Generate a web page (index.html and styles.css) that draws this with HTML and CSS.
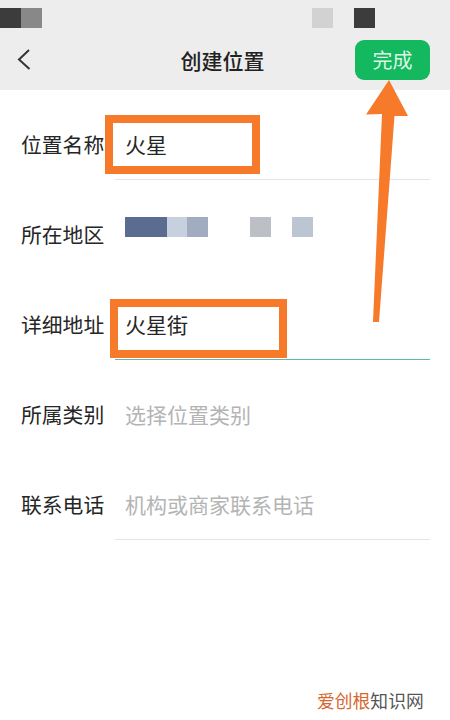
FILE: index.html
```html
<!DOCTYPE html>
<html lang="zh-CN">
<head>
<meta charset="utf-8">
<title>创建位置</title>
<link rel="stylesheet" href="styles.css">
</head>
<body>
<div class="page">
  <header class="top">
    <div class="status">
      <div class="mosaic">
        <i class="px dark"></i><i class="px mid"></i>
      </div>
      <div class="mosaic right">
        <i class="px light"></i><i class="px gap"></i><i class="px dark"></i>
      </div>
    </div>
    <div class="nav">
      <svg class="back" width="14" height="24" viewBox="0 0 14 24"><path d="M12 2 L2 11.500 L12.500 21" fill="none" stroke="#333" stroke-width="2"/></svg>
      <h1 class="title">创建位置</h1>
      <button class="done">完成</button>
    </div>
  </header>
  <main class="form">
    <div class="row"><span class="label">位置名称</span><div class="field line"><span class="value">火星</span></div></div>
    <div class="row"><span class="label">所在地区</span><div class="field">
      <div class="region"><i class="r r1"></i><i class="r r2"></i><i class="r r3"></i><i class="r r4"></i><i class="r r5"></i></div>
    </div></div>
    <div class="row"><span class="label">详细地址</span><div class="field line active"><span class="value">火星街</span></div></div>
    <div class="row"><span class="label">所属类别</span><div class="field"><span class="hint">选择位置类别</span></div></div>
    <div class="row"><span class="label">联系电话</span><div class="field line"><span class="hint">机构或商家联系电话</span></div></div>
  </main>
  <div class="box box-name"></div>
  <div class="box box-addr"></div>
  <svg class="arrow" width="450" height="720" viewBox="0 0 450 720"><polygon points="389,80 408,116 394.500,116 379,322 373,322 382,114 366,114.500" fill="#f77a2b"/></svg>
  <div class="mark"><span class="mark-a">爱创根</span><span class="mark-b">知识网</span></div>
</div>
</body>
</html>
```
FILE: styles.css
```css
* { box-sizing: border-box; }
html, body { margin: 0; padding: 0; }
body { background: #fff; font-family: "Noto Sans CJK SC", "Noto Sans", sans-serif; }
.page { position: relative; width: 450px; height: 720px; overflow: hidden; background: #fff; }
.top { height: 90px; background: #ededed; display: flex; flex-direction: column; }
.status { height: 40px; padding: 8px 0 0; display: flex; justify-content: space-between; }
.mosaic { display: flex; height: 20px; }
.mosaic.right { width: 138px; }
.px { display: block; width: 21px; height: 20px; filter: blur(.6px); }
.px.dark { background: #3c3c3c; }
.px.mid { background: #888; }
.px.light { background: #d2d2d2; }
.px.gap { background: transparent; }
.nav { height: 40px; display: flex; align-items: center; padding: 0 20px 0 17px; position: relative; }
.back { display: block; margin-top: -1px; }
.title { position: absolute; left: 130px; width: 185px; top: 0; margin: 0; text-align: center; font-size: 21px; line-height: 40px; font-weight: 500; color: #222; }
.done { margin-left: auto; width: 75px; height: 40px; border: 0; border-radius: 9px; padding: 0; background: #14b85e; color: #dcf6e6; font: 400 20px/40px "Noto Sans CJK SC", sans-serif; }
.form { display: flex; flex-direction: column; }
.row { height: 90px; display: flex; align-items: stretch; padding: 18px 20px 0 21px; }
.label { width: 94px; font-size: 20.800px; line-height: 72px; color: #262626; white-space: nowrap; }
.field { flex: 1; padding-left: 10px; display: flex; align-items: center; border-bottom: 1px solid transparent; }
.field.line { border-bottom-color: #e4e4e4; }
.field.active { border-bottom-color: #5fb9a5; }
.value { font-size: 21px; color: #262626; }
.hint { font-size: 21px; color: #b4b4b4; }
.region { display: flex; height: 20px; margin-top: -14px; }
.r { display: block; height: 20px; filter: blur(.4px); }
.r1 { width: 42px; background: #5a6d91; }
.r2 { width: 20px; background: #c6d0de; }
.r3 { width: 21px; background: #a1acc1; margin-right: 42px; }
.r4 { width: 21px; background: #bcc0c6; margin-right: 21px; }
.r5 { width: 21px; background: #bcc6d3; }
.box { position: absolute; border: 8px solid #f77a2b; }
.box-name { left: 105px; top: 115px; width: 155px; height: 59px; }
.box-addr { left: 110px; top: 299px; width: 177px; height: 59px; }
.arrow { position: absolute; left: 0; top: 0; }
.mark { position: absolute; left: 317px; top: 687px; font-size: 17.800px; line-height: 26px; white-space: nowrap; }
.mark-a { color: #d5682f; }
.mark-b { color: #555; }
```
